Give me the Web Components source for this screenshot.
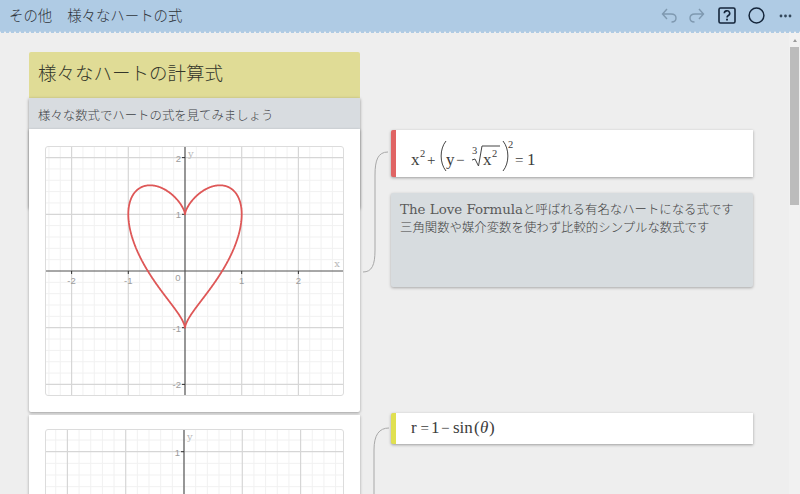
<!DOCTYPE html>
<html lang="ja">
<head>
<meta charset="utf-8">
<style>
html, body { margin: 0; height: 100%; overflow: hidden; background: #eee; }
body { font-family: "Noto Sans CJK JP", sans-serif; font-weight: 300; color: #333; display: flex; flex-direction: column; }
</style>
</head>
<body>
<app-header crumb="その他" page="様々なハートの式"></app-header>
<page-body>
	<formula-row height="283" pad="17" line="heart" overlap>
		<section-head slot="head" title-text="様々なハートの計算式" sub="様々な数式でハートの式を見てみましょう"></section-head>
		<graph-plot slot="graph" kind="heart" unit="56.7" height="250" ox="139" oy="124"></graph-plot>
		<math-card slot="side" accent="#e06464"><math-formula kind="heart"></math-formula></math-card>
		<note-card slot="side"><span style="font-size:13.4px;color:#5a5a5a">The Love Formula</span>と呼ばれる有名なハートになる式です<br>三角関数や媒介変数を使わず比較的シンプルな数式です</note-card>
	</formula-row>
	<formula-row height="200" pad="14" line="second">
		<graph-plot slot="graph" kind="none" unit="58.3" height="80" ox="138" oy="80"></graph-plot>
		<math-card slot="side" accent="#e0e050" short><math-formula kind="polar"></math-formula></math-card>
	</formula-row>
</page-body>
<script>
// top bar with scalloped lower edge
class AppHeader extends HTMLElement {
	constructor(){
		super();
		this.attachShadow({mode: 'open'}).innerHTML = `
			<style>
				:host { display: flex; flex: none; height: 31px; align-items: center; position: relative; z-index: 1; background: #afcbe4; padding: 0 8px 0 9px; font-size: 14.4px; color: #2f353b; }
				:host::after { content: ''; position: absolute; left: 0; right: 0; top: 31px; height: 3px;
					background: radial-gradient(circle at 2.5px 0, #afcbe4 1.9px, transparent 2.4px) 0 0 / 5px 3px repeat-x; }
				.crumb { margin: 0 15px 2px 0; }
				.title { flex: 1; margin-bottom: 2px; }
				.icons { display: flex; align-items: center; }
				svg { display: block; }
			</style>
			<span class="crumb">${this.getAttribute('crumb')}</span>
			<span class="title">${this.getAttribute('page')}</span>
			<div class="icons">
				<svg width="16" height="16" viewBox="0 0 16 16" fill="none" stroke="#7f99b0" stroke-width="1.400" style="margin-right:12px"><path d="M6 1 1.500 6 6 11M1.500 6H10C13.500 6 15 8 15 10S13.500 14 10.500 14"/></svg>
				<svg width="16" height="16" viewBox="0 0 16 16" fill="none" stroke="#7f99b0" stroke-width="1.400" style="margin-right:13px"><path d="M10 1l4.500 5L10 11M14.500 6H6C2.500 6 1 8 1 10S2.500 14 5.500 14"/></svg>
				<svg width="18" height="17" viewBox="0 0 18 17" style="margin-right:12px"><rect x="1" y="1" width="16" height="15" rx="1.500" fill="none" stroke="#14253a" stroke-width="1.600"/><path d="M6.300 6.300a2.700 2.500 0 1 1 4 2.200c-.9.600-1.300 1-1.300 2" fill="none" stroke="#14253a" stroke-width="1.600"/><rect x="8.100" y="11.700" width="1.800" height="1.800" fill="#14253a"/></svg>
				<svg width="17" height="17" viewBox="0 0 17 17" style="margin-right:14px"><circle cx="8.500" cy="8.500" r="7.400" fill="none" stroke="#14253a" stroke-width="1.500"/></svg>
				<svg width="13" height="4" viewBox="0 0 13 4" fill="#33475b"><circle cx="2" cy="2" r="1.400"/><circle cx="6.500" cy="2" r="1.400"/><circle cx="11" cy="2" r="1.400"/></svg>
			</div>
		`;
	}
}

// scroll area, the scrollbar is just drawn
class PageBody extends HTMLElement {
	constructor(){
		super();
		this.attachShadow({mode: 'open'}).innerHTML = `
			<style>
				:host { display: flex; flex: 1; min-height: 0; overflow: hidden; }
				.content { flex: 1; min-width: 0; padding: 21px 0 0 29px; display: flex; flex-direction: column; gap: 3px; }
				.bar { flex: none; width: 11px; box-sizing: border-box; padding: 8px 1px 0 1px; background: #f1f1f1; display: flex; flex-direction: column; align-items: center; }
				.arrow { width: 0; height: 0; border: 2.500px solid transparent; border-bottom: 3px solid #9a9a9a; border-top: 0; margin-bottom: 5px; }
				.thumb { width: 9px; height: 158px; background: #bcbcbc; }
			</style>
			<div class="content"><slot></slot></div>
			<div class="bar"><div class="arrow"></div><div class="thumb"></div></div>
		`;
	}
}

class SectionHead extends HTMLElement {
	constructor(){
		super();
		this.attachShadow({mode: 'open'}).innerHTML = `
			<style>
				:host { display: block; }
				.title { height: 46px; box-sizing: border-box; padding: 0 0 7px 9px; display: flex; align-items: center; background: #e0dc96; border-radius: 2px 2px 0 0; font-size: 18.500px; color: #33362a; }
				.sub { height: 110px; box-sizing: border-box; padding: 2px 0 0 9px; line-height: 31px; background: #d8dce0; font-size: 12.400px; color: #3f4347; box-shadow: 0 1px 3px rgba(0,0,0,.4); }
			</style>
			<div class="title">${this.getAttribute('title-text')}</div>
			<div class="sub">${this.getAttribute('sub')}</div>
		`;
	}
}

// left column card + right column, joined with a curved line
class FormulaRow extends HTMLElement {
	constructor(){
		super();
		const paths = {
			heart: 'M28 1C18 1 15 9 15 24V99C15 114 12 121 3 121',
			second: 'M29 13C19 13 14 20 14 35V90'
		};
		this.attachShadow({mode: 'open'}).innerHTML = `
			<style>
				:host { display: flex; flex: none; gap: 31px; position: relative; }
				.left { flex: none; width: 331px; display: flex; flex-direction: column; }
				.card { position: relative; background: #fff; height: ${this.getAttribute('height')}px; box-sizing: border-box; padding: ${this.getAttribute('pad')}px 16px 0 16px; box-shadow: 0 1px 3px rgba(0,0,0,.35); border-radius: 0 0 2px 2px; overflow: hidden; margin-top: ${this.hasAttribute('overlap') ? -79 : 0}px; }
				.right { flex: none; width: 362px; display: flex; flex-direction: column; gap: 16px; }
				.line { position: absolute; fill: none; stroke: #a8a8a8; stroke-width: 1; }
				.heart { left: 331px; top: 99px; }
				.second { left: 331px; top: 0; }
				.heart ~ .right { padding-top: 78px; }
			</style>
			<div class="left">
				<slot name="head"></slot>
				<div class="card"><slot name="graph"></slot></div>
			</div>
			<svg class="line ${this.getAttribute('line')}" width="30" height="125"><path d="${paths[this.getAttribute('line')]}"/></svg>
			<div class="right"><slot name="side"></slot></div>
		`;
	}
}

// coordinate grid, optional heart curve
class GraphPlot extends HTMLElement {
	constructor(){
		super();
		const w = 297, h = +this.getAttribute('height');
		const u = +this.getAttribute('unit'), ox = +this.getAttribute('ox'), oy = +this.getAttribute('oy');
		let minor = '', major = '', labels = '', ticks = '';
		for (let i = -20; i <= 20; i++) {
			const x = ox + i * u / 5, y = oy + i * u / 5;
			const big = i % 5 === 0;
			if (x > 0 && x < w) {
				if (big && i) major += `<path d="M${x} 0V${h}"/>`;
				else if (i) minor += `<path d="M${x} 0V${h}"/>`;
			}
			if (y > 0 && y < h) {
				if (big && i) major += `<path d="M0 ${y}H${w}"/>`;
				else if (i) minor += `<path d="M0 ${y}H${w}"/>`;
			}
		}
		const label = (x, y, t, extra = '') => `<text x="${x}" y="${y}" ${extra}>${t}</text>`;
		for (let n = -2; n <= 2; n++) {
			if (!n) continue;
			const x = ox + n * u, y = oy - n * u;
			if (oy < h) {
				labels += label(x, oy + 13, n < 0 ? '-' + -n : n, 'text-anchor="middle"');
				ticks += `<path d="M${x} ${oy}v3"/>`;
			}
			if (y > 5 && y < h) {
				labels += label(ox - 4, y + 4, n < 0 ? '-' + -n : n, 'text-anchor="end"');
				ticks += `<path d="M${ox - 3} ${y}h3"/>`;
			}
		}
		labels += label(ox + 3, 10, 'y', 'class="name"');
		if (oy < h) {
			labels += label(ox - 7, oy + 10, '0', 'text-anchor="middle"');
			labels += label(w - 6, oy - 4, 'x', 'text-anchor="middle" class="name"');
		}
		let curve = '';
		if (this.getAttribute('kind') === 'heart') {
			// x^2 + (y - cbrt(x^2))^2 = 1
			let up = [], down = [];
			for (let i = -200; i <= 200; i++) {
				const t = Math.sin(i / 200 * Math.PI / 2), c = Math.cbrt(t * t), r = Math.sqrt(Math.max(0, 1 - t * t));
				up.push(`${(ox + t * u).toFixed(2)} ${(oy - (c + r) * u).toFixed(2)}`);
				down.unshift(`${(ox + t * u).toFixed(2)} ${(oy - (c - r) * u).toFixed(2)}`);
			}
			curve = `<path d="M${up.join('L')}L${down.join('L')}Z" fill="none" stroke="#de5757" stroke-width="1.800" stroke-linejoin="round"/>`;
		}
		this.attachShadow({mode: 'open'}).innerHTML = `
			<style>
				:host { display: block; width: ${w + 2}px; }
				svg { display: block; border: 1px solid #dcdcdc; border-radius: 3px; box-sizing: border-box; }
				text { font: 9.500px "Liberation Sans", sans-serif; fill: #9c9c9c; }
				text.name { font: 10px "DejaVu Serif", serif; fill: #b8b8b8; }
			</style>
			<svg width="${w + 2}" height="${h}" viewBox="0 0 ${w} ${h - 2}">
				<g stroke="#f1f1f1" stroke-width="1">${minor}</g>
				<g stroke="#d6d6d6" stroke-width="1.200">${major}</g>
				<path d="M${ox} 0V${h}" stroke="#6a6a6a" stroke-width="1.400"/>
				${oy < h ? `<path d="M0 ${oy}H${w}" stroke="#505050" stroke-width="1"/>` : ''}
				<g stroke="#333" stroke-width="1">${ticks}</g>
				${labels}
				${curve}
			</svg>
		`;
	}
}

class MathCard extends HTMLElement {
	constructor(){
		super();
		const short = this.hasAttribute('short');
		this.attachShadow({mode: 'open'}).innerHTML = `
			<style>
				:host { display: flex; align-items: center; height: ${short ? 31 : 47}px; box-sizing: border-box; background: #fff; border-left: 5px solid ${this.getAttribute('accent')}; border-radius: 2px 0 0 2px; padding-left: 15px; box-shadow: 0 1px 3px rgba(0,0,0,.35); ${short ? 'margin-top: -2px;' : ''} }
			</style>
			<slot></slot>
		`;
	}
}

// formulas are set glyph by glyph, brackets and the root sign are strokes
class MathFormula extends HTMLElement {
	constructor(){
		super();
		const heart = this.getAttribute('kind') === 'heart';
		const t = (x, y, s, c = '') => `<text x="${x}" y="${y}" class="${c}">${s}</text>`;
		const body = heart ? `
			${t(0, 35, 'x')}${t(9, 27, '2', 'sup')}${t(16, 35, '+', 'op')}
			<path d="M35 11C28.500 19 28.500 33 35 41"/>
			${t(35, 35, 'y')}${t(45, 35, '−', 'op')}${t(61, 24, '3', 'sup')}
			<path d="M61 30l3 -1 3.500 7L71 16H89"/>
			${t(72, 35, 'x')}${t(81, 27, '2', 'sup')}
			<path d="M92 11C98.500 19 98.500 33 92 41"/>
			${t(97, 18, '2', 'sup')}${t(104, 35, '=', 'op')}${t(116, 35, '1')}
		` : `
			${t(0, 20, 'r')}${t(9.500, 20, '=', 'op')}${t(20, 20, '1')}${t(30, 20, '−', 'op')}${t(42, 20, 'sin')}
			${t(63, 20, '(')}${t(69, 20, 'θ', 'it')}${t(78, 20, ')')}
		`;
		this.attachShadow({mode: 'open'}).innerHTML = `
			<style>
				:host { display: block; }
				svg { display: block; }
				text { font: 17px "Liberation Serif", serif; fill: #3c3c3c; }
				text.sup { font-size: 10.500px; }
				text.op { font-size: 15px; }
				text.it { font-style: italic; }
				path { fill: none; stroke: #444; stroke-width: 1; }
			</style>
			<svg width="130" height="${heart ? 47 : 31}">${body}</svg>
		`;
	}
}

class NoteCard extends HTMLElement {
	constructor(){
		super();
		this.attachShadow({mode: 'open'}).innerHTML = `
			<style>
				:host { display: block; height: 94px; box-sizing: border-box; background: #d7dcdf; border-radius: 2px; padding: 8px 9px; font: 300 12.400px/18px "DejaVu Serif", "Noto Sans CJK JP", serif; color: #424242; box-shadow: 0 1px 3px rgba(0,0,0,.3); }
			</style>
			<slot></slot>
		`;
	}
}

customElements.define('app-header', AppHeader);
customElements.define('page-body', PageBody);
customElements.define('section-head', SectionHead);
customElements.define('formula-row', FormulaRow);
customElements.define('graph-plot', GraphPlot);
customElements.define('math-card', MathCard);
customElements.define('math-formula', MathFormula);
customElements.define('note-card', NoteCard);
</script>
</body>
</html>
